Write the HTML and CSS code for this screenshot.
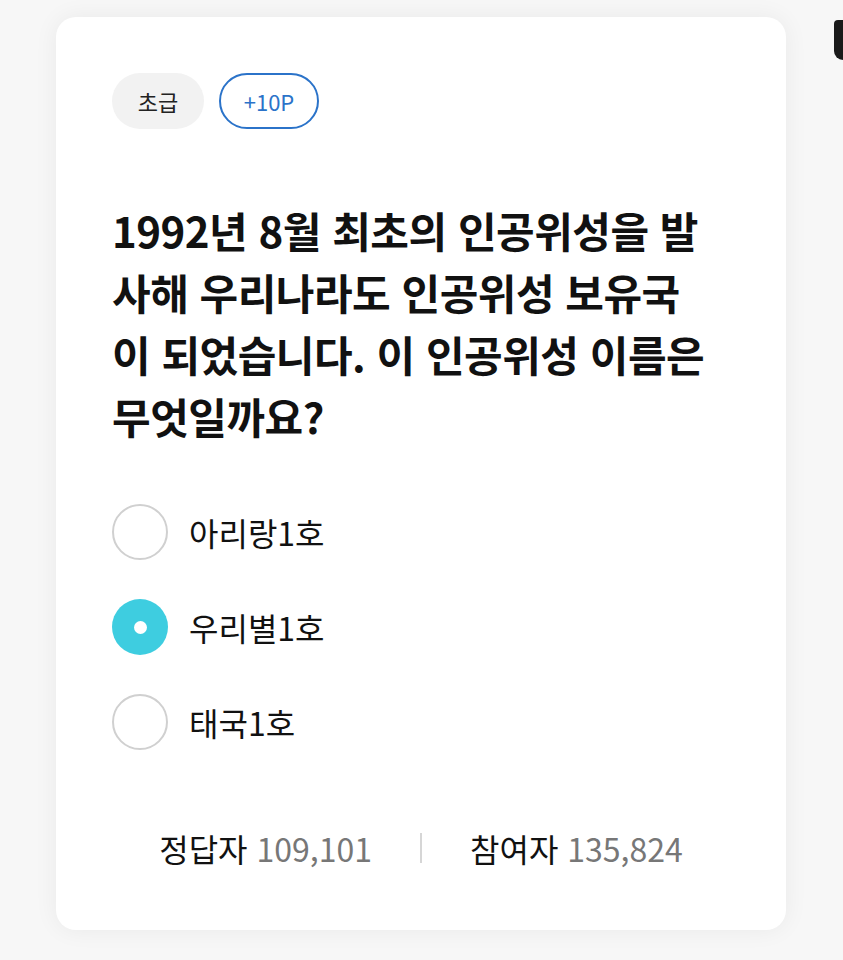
FILE: index.html
```html
<!DOCTYPE html>
<html lang="ko">
<head>
  <meta charset="UTF-8">
  <meta name="viewport" content="width=device-width, initial-scale=1.0">
  <title>오늘의 퀴즈</title>
  <link rel="stylesheet" href="styles.css">
</head>
<body>
  <div class="edge-mark"></div>

  <div class="quiz-card">
    <div class="tags">
      <span class="tag level">초급</span>
      <span class="tag point">+10P</span>
    </div>

    <h1 class="question">1992년 8월 최초의 인공위성을 발사해 우리나라도 인공위성 보유국이 되었습니다. 이 인공위성 이름은 무엇일까요?</h1>

    <div class="options">
      <label class="option">
        <span class="radio"></span>
        <span class="option-text">아리랑1호</span>
      </label>
      <label class="option">
        <span class="radio checked"></span>
        <span class="option-text">우리별1호</span>
      </label>
      <label class="option">
        <span class="radio"></span>
        <span class="option-text">태국1호</span>
      </label>
    </div>

    <div class="summary">
      <div class="count">정답자 <span class="num">109,101</span></div>
      <div class="divider"></div>
      <div class="count">참여자 <span class="num">135,824</span></div>
    </div>
  </div>
</body>
</html>
```

FILE: styles.css
```css
body {
  margin: 0;
  padding: 17px 0 30px 56px;
  background: #f7f7f7;
  font-family: "Noto Sans CJK KR", "Noto Sans", sans-serif;
  color: #111;
  position: relative;
  overflow: hidden;
}

.edge-mark {
  position: absolute;
  top: 20px;
  left: 834px;
  width: 14px;
  height: 40px;
  background: #1a1a1a;
  border-radius: 4px 0 0 9px;
}

.quiz-card {
  width: 730px;
  height: 913px;
  box-sizing: border-box;
  padding: 56px 56px 0 56px;
  background: #fff;
  border-radius: 20px;
  box-shadow: 0 0 24px rgba(0, 0, 0, 0.06);
}

.tags {
  display: flex;
  gap: 15px;
}

.tag {
  height: 56px;
  box-sizing: border-box;
  display: flex;
  align-items: center;
  justify-content: center;
  border-radius: 28px;
  font-size: 22px;
}

.level {
  width: 92px;
  background: #f2f2f2;
  color: #222;
}

.point {
  width: 100px;
  border: 2px solid #2b73c9;
  color: #2b73c9;
}

.question {
  margin: 70px 0 0 0;
  max-width: 603px;
  font-size: 42px;
  font-weight: 700;
  line-height: 62px;
  letter-spacing: -0.5px;
  word-break: break-all;
}

.options {
  margin-top: 57px;
  display: flex;
  flex-direction: column;
  gap: 39px;
}

.option {
  display: flex;
  align-items: center;
  gap: 21px;
  height: 56px;
}

.radio {
  width: 56px;
  height: 56px;
  box-sizing: border-box;
  border: 2px solid #d0d0d0;
  border-radius: 50%;
  display: flex;
  align-items: center;
  justify-content: center;
}

.radio.checked {
  border: none;
  background: #3ecde0;
}

.radio.checked::after {
  content: '';
  width: 13px;
  height: 13px;
  border-radius: 50%;
  background: #fff;
}

.option-text {
  font-size: 32px;
}

.summary {
  margin-top: 78px;
  display: flex;
  justify-content: center;
  align-items: center;
  gap: 48px;
  height: 40px;
}

.count {
  font-size: 32px;
}

.num {
  color: #777;
}

.divider {
  width: 2px;
  height: 30px;
  background: #d6d6d6;
}
```
